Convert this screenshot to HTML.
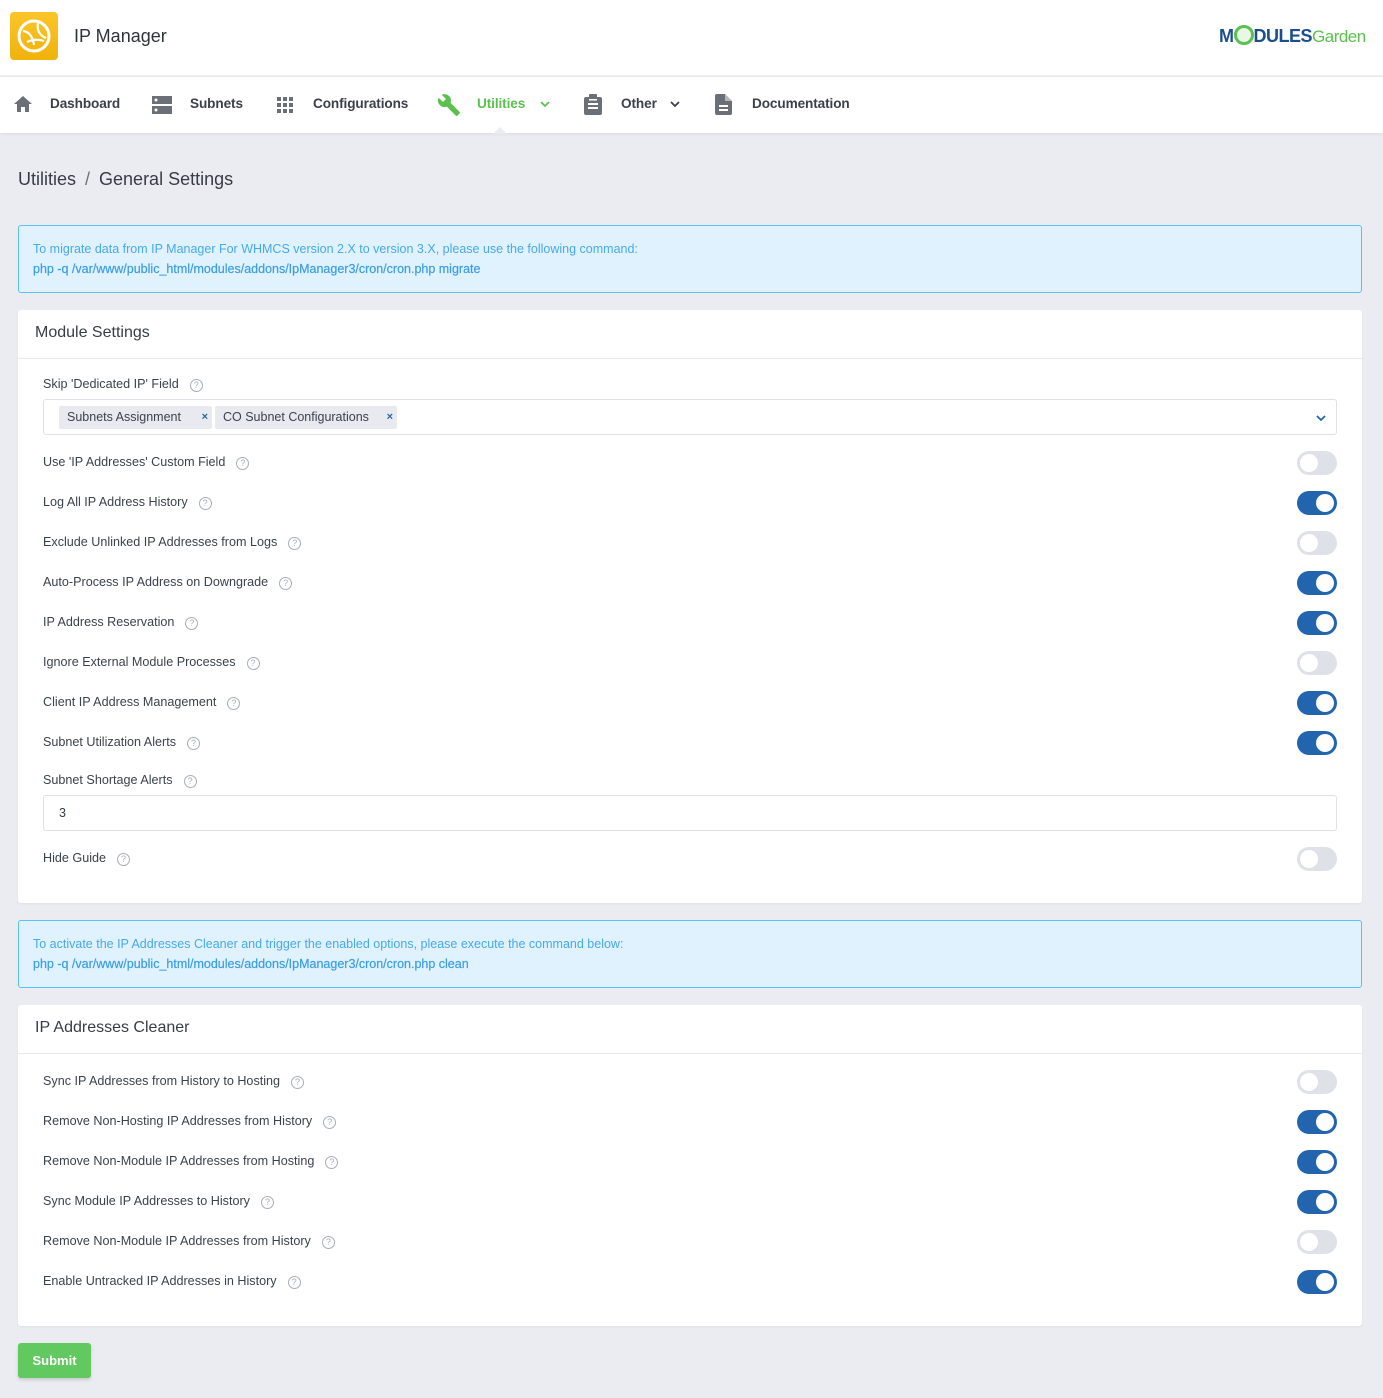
<!DOCTYPE html>
<html><head><meta charset="utf-8"><style>
*{box-sizing:border-box;margin:0;padding:0}
body{width:1383px;height:1398px;background:#ebecf1;font-family:"Liberation Sans",sans-serif;color:#383d45;position:relative;overflow:hidden}
.a{position:absolute}
.hdr{left:0;top:0;width:1383px;height:76px;background:#fff;border-bottom:1px solid #eceef2}
.nav{left:0;top:77px;width:1383px;height:56px;background:#fff;box-shadow:0 1px 3px rgba(0,0,0,.08)}
.ni{position:absolute;top:96px;font-size:13.6px;color:#3c4048;font-weight:bold;letter-spacing:-.1px}
.info{left:18px;width:1344px;height:68px;background:#dff2fd;border:1px solid #5bc0f5;border-radius:3px;color:#48a9ec;font-size:12.5px;padding:13px 14px;line-height:20px}
.card{left:18px;width:1344px;background:#fff;border-radius:3px;box-shadow:0 1px 2px rgba(0,0,0,.05)}
.ct{position:absolute;left:17px;top:14px;font-size:16px;color:#383d45}
.line{position:absolute;left:0;right:0;top:48px;height:1px;background:#e8eaee}
.lb{position:absolute;left:43px;font-size:12.6px;color:#3c424b}
.q{display:inline-block;width:13px;height:13px;border:1px solid #a9adb5;border-radius:50%;font-size:9px;line-height:11px;text-align:center;color:#a9adb5;margin-left:11px;vertical-align:-1px;position:relative;top:-1px}
.tg{position:absolute;left:1297px;width:40px;height:24px;border-radius:12px;background:#dfe1e8}
.tg::after{content:"";position:absolute;left:3px;top:3px;width:18px;height:18px;border-radius:50%;background:#fff}
.tg.on{background:#2264ad}
.tg.on::after{left:19px}
.inp{position:absolute;left:43px;width:1294px;height:36px;border:1px solid #dfe1e6;border-radius:3px;background:#fff}
.tag{position:absolute;top:6px;height:23px;background:#e9eaef;border-radius:2px;font-size:12.5px;line-height:23px;padding-left:8px;color:#3c424b}
</style></head><body>
<div class="a hdr"></div>
<div class="a" style="left:10px;top:12px;width:48px;height:48px;border-radius:4px;background:linear-gradient(#fbc52a,#f0b20c)">
<svg width="48" height="48" viewBox="0 0 48 48"><circle cx="24" cy="24" r="15" fill="none" stroke="#fff" stroke-width="3"/><path d="M13 19 Q22 20 24 33 M28 11 Q26 22 36 26 M17 30 Q25 26 34 29" fill="none" stroke="#fff" stroke-width="2.2"/></svg></div>
<div class="a" style="left:74px;top:26px;font-size:18px;color:#2f343b">IP Manager</div>
<div class="a" style="left:1219px;top:25px;font-size:18px;font-weight:bold;color:#1b4e8f;letter-spacing:-.5px">M<span style="display:inline-block;width:20px;height:20px;border:3px solid #5cc04f;border-radius:50%;vertical-align:-3px;background:#e9f7e6"></span>DULES<span style="font-weight:normal;color:#5cc04f;font-size:17px">Garden</span></div>
<div class="a nav"></div>
<svg class="a" style="left:13px;top:95px" width="20" height="18" viewBox="0 0 20 18"><path d="M10 1 L19 9 H16 V17 H12 V12 H8 V17 H4 V9 H1Z" fill="#6b6f77"/></svg>
<div class="ni" style="left:50px">Dashboard</div>
<svg class="a" style="left:152px;top:96px" width="20" height="18"><rect x="0" y="0" width="20" height="8" fill="#6b6f77"/><rect x="0" y="10" width="20" height="8" fill="#6b6f77"/><circle cx="4" cy="4" r="1.5" fill="#fff"/><circle cx="4" cy="14" r="1.5" fill="#fff"/></svg>
<div class="ni" style="left:190px">Subnets</div>
<svg class="a" style="left:277px;top:97px" width="16" height="16" fill="#6b6f77"><rect x="0" y="0" width="4" height="4"/><rect x="6" y="0" width="4" height="4"/><rect x="12" y="0" width="4" height="4"/><rect x="0" y="6" width="4" height="4"/><rect x="6" y="6" width="4" height="4"/><rect x="12" y="6" width="4" height="4"/><rect x="0" y="12" width="4" height="4"/><rect x="6" y="12" width="4" height="4"/><rect x="12" y="12" width="4" height="4"/></svg>
<div class="ni" style="left:313px">Configurations</div>
<svg class="a" style="left:437px;top:93px" width="24" height="24" viewBox="0 0 24 24"><path d="M22.7 19l-9.1-9.1c.9-2.3.4-5-1.5-6.9-2-2-5-2.4-7.4-1.3L9 6 6 9 1.6 4.7C.4 7.1.9 10.1 2.9 12.1c1.9 1.9 4.6 2.4 6.9 1.5l9.1 9.1c.4.4 1 .4 1.4 0l2.3-2.3c.5-.4.5-1.1.1-1.4z" fill="#5cc04f"/></svg>
<div class="ni" style="left:477px;color:#5cc04f">Utilities</div>
<svg class="a" style="left:540px;top:101px" width="10" height="7"><path d="M1 1 L5 5 L9 1" fill="none" stroke="#5cc04f" stroke-width="1.8"/></svg>
<div class="a" style="left:493px;top:127px;width:0;height:0;border-left:7px solid transparent;border-right:7px solid transparent;border-bottom:7px solid #ebecf1"></div>
<svg class="a" style="left:584px;top:94px" width="18" height="21" viewBox="0 0 18 21"><rect x="0" y="3" width="18" height="18" rx="2" fill="#6b6f77"/><rect x="5" y="0" width="8" height="5" rx="1" fill="#6b6f77"/><rect x="4" y="9" width="10" height="2" fill="#fff"/><rect x="4" y="13" width="10" height="2" fill="#fff"/><rect x="5" y="5" width="8" height="1.5" fill="#fff"/></svg>
<div class="ni" style="left:621px">Other</div>
<svg class="a" style="left:670px;top:101px" width="10" height="7"><path d="M1 1 L5 5 L9 1" fill="none" stroke="#3c4048" stroke-width="1.8"/></svg>
<svg class="a" style="left:715px;top:94px" width="17" height="21" viewBox="0 0 17 21"><path d="M0 2 Q0 0 2 0 H10 L17 7 V19 Q17 21 15 21 H2 Q0 21 0 19Z" fill="#6b6f77"/><path d="M10 0 V7 H17" fill="#fff" opacity=".5"/><rect x="4" y="11" width="9" height="2" fill="#fff"/><rect x="4" y="15" width="9" height="2" fill="#fff"/></svg>
<div class="ni" style="left:752px">Documentation</div>

<div class="a" style="left:18px;top:169px;font-size:18px;color:#383d45">Utilities <span style="color:#6b6f77;margin:0 4px">/</span> General Settings</div>

<div class="a info" style="top:225px">To migrate data from IP Manager For WHMCS version 2.X to version 3.X, please use the following command:<br><span style="color:#3b9ee6;-webkit-text-stroke:.2px #3b9ee6">php -q /var/www/public_html/modules/addons/IpManager3/cron/cron.php migrate</span></div>

<div class="a card" style="top:310px;height:593px"><div class="ct">Module Settings</div><div class="line"></div></div>
<div class="lb" style="top:377px">Skip 'Dedicated IP' Field<span class="q">?</span></div>
<div class="inp" style="top:399px"><div class="tag" style="left:15px;width:153px">Subnets Assignment<span style="position:absolute;right:4px;font-size:11px;color:#2264ad;font-weight:bold">×</span></div><div class="tag" style="left:171px;width:182px">CO Subnet Configurations<span style="position:absolute;right:4px;font-size:11px;color:#2264ad;font-weight:bold">×</span></div>
<svg style="position:absolute;right:10px;top:15px" width="10" height="7"><path d="M1 1 L5 5 L9 1" fill="none" stroke="#2264ad" stroke-width="1.8"/></svg></div>
<div class="lb" style="top:455px">Use 'IP Addresses' Custom Field<span class="q">?</span></div><div class="tg" style="top:451px"></div>
<div class="lb" style="top:495px">Log All IP Address History<span class="q">?</span></div><div class="tg on" style="top:491px"></div>
<div class="lb" style="top:535px">Exclude Unlinked IP Addresses from Logs<span class="q">?</span></div><div class="tg" style="top:531px"></div>
<div class="lb" style="top:575px">Auto-Process IP Address on Downgrade<span class="q">?</span></div><div class="tg on" style="top:571px"></div>
<div class="lb" style="top:615px">IP Address Reservation<span class="q">?</span></div><div class="tg on" style="top:611px"></div>
<div class="lb" style="top:655px">Ignore External Module Processes<span class="q">?</span></div><div class="tg" style="top:651px"></div>
<div class="lb" style="top:695px">Client IP Address Management<span class="q">?</span></div><div class="tg on" style="top:691px"></div>
<div class="lb" style="top:735px">Subnet Utilization Alerts<span class="q">?</span></div><div class="tg on" style="top:731px"></div>
<div class="lb" style="top:773px">Subnet Shortage Alerts<span class="q">?</span></div>
<div class="inp" style="top:795px"><span style="position:absolute;left:15px;top:10px;font-size:12.5px">3</span></div>
<div class="lb" style="top:851px">Hide Guide<span class="q">?</span></div><div class="tg" style="top:847px"></div>

<div class="a info" style="top:920px">To activate the IP Addresses Cleaner and trigger the enabled options, please execute the command below:<br><span style="color:#3b9ee6;-webkit-text-stroke:.2px #3b9ee6">php -q /var/www/public_html/modules/addons/IpManager3/cron/cron.php clean</span></div>

<div class="a card" style="top:1005px;height:321px"><div class="ct">IP Addresses Cleaner</div><div class="line"></div></div>
<div class="lb" style="top:1074px">Sync IP Addresses from History to Hosting<span class="q">?</span></div><div class="tg" style="top:1070px"></div>
<div class="lb" style="top:1114px">Remove Non-Hosting IP Addresses from History<span class="q">?</span></div><div class="tg on" style="top:1110px"></div>
<div class="lb" style="top:1154px">Remove Non-Module IP Addresses from Hosting<span class="q">?</span></div><div class="tg on" style="top:1150px"></div>
<div class="lb" style="top:1194px">Sync Module IP Addresses to History<span class="q">?</span></div><div class="tg on" style="top:1190px"></div>
<div class="lb" style="top:1234px">Remove Non-Module IP Addresses from History<span class="q">?</span></div><div class="tg" style="top:1230px"></div>
<div class="lb" style="top:1274px">Enable Untracked IP Addresses in History<span class="q">?</span></div><div class="tg on" style="top:1270px"></div>

<div class="a" style="left:18px;top:1343px;width:73px;height:35px;background:#62c960;border-radius:3px;color:#fff;font-size:13px;font-weight:bold;text-align:center;line-height:35px;box-shadow:0 2px 3px rgba(0,0,0,.15)">Submit</div>
</body></html>
